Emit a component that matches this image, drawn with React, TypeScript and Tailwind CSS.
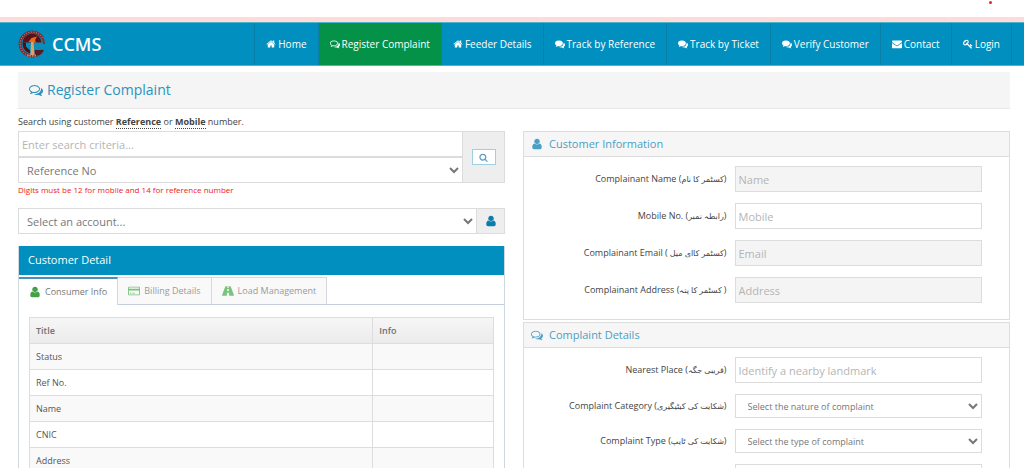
import type { ReactNode } from 'react'
import clsx from 'clsx'

const icons = {
  home: 'M1472 992v480q0 26-19 45t-45 19h-384v-384h-256v384h-384q-26 0-45-19t-19-45v-480q0-1 .5-3t.5-3l575-474 575 474q1 2 1 6zm223-69l-62 74q-8 9-21 11h-3q-13 0-21-7l-692-577-692 577q-12 8-24 7-13-2-21-11l-62-74q-8-10-7-23.5t11-21.5l719-599q32-26 76-26t76 26l244 204v-195q0-14 9-23t23-9h192q14 0 23 9t9 23v408l219 182q10 8 11 21.5t-7 23.5z',
  commentsO:
    'M704 384q-153 0-286 52t-211.5 141-78.5 191q0 82 53 158t149 132l97 56-35 84q34-20 62-39l44-31 53 10q78 14 153 14 153 0 286-52t211.5-141 78.5-191-78.5-191-211.5-141-286-52zm0-128q191 0 353.5 68.5t256.5 186.5 94 257-94 257-256.5 186.5-353.5 68.5q-86 0-176-16-124 88-278 128-36 9-86 16h-3q-11 0-20.5-8t-11.5-21q-1-3-1-6.5t.5-6.5 2-6l2.5-5 3.5-5.5 4-5 4.5-5 4-4.5q5-6 23-25t26-29.5 22.5-29 25-38.5 20.5-44q-124-72-195-177t-71-224q0-139 94-257t256.5-186.5 353.5-68.5zm822 1169q10 24 20.5 44t25 38.5 22.5 29 26 29.5 23 25q1 1 4 4.5t4.5 5 4 5 3.5 5.5l2.5 5 2 6 .5 6.5-1 6.5q-3 14-13 22t-22 7q-50-7-86-16-154-40-278-128-90 16-176 16-271 0-472-132 58 4 88 4 161 0 309-45t264-129q125-92 192-212t67-254q0-77-23-152 129 71 204 178t75 230q0 120-71 224.5t-195 176.5z',
  comments:
    'M1408 768q0 139-94 257t-256.5 186.5-353.5 68.5q-86 0-176-16-124 88-278 128-36 9-86 16h-3q-11 0-20.5-8t-11.5-21q-1-3-1-6.5t.5-6.5 2-6l2.5-5 3.5-5.5 4-5 4.5-5 4-4.5q5-6 23-25t26-29.5 22.5-29 25-38.5 20.5-44q-124-72-195-177t-71-224q0-139 94-257t256.5-186.5 353.5-68.5 353.5 68.5 256.5 186.5 94 257zm384 256q0 120-71 224.5t-195 176.5q10 24 20.5 44t25 38.5 22.5 29 26 29.5 23 25q1 1 4 4.5t4.5 5 4 5 3.5 5.5l2.5 5 2 6 .5 6.5-1 6.5q-3 14-13 22t-22 7q-50-7-86-16-154-40-278-128-90 16-176 16-271 0-472-132 58 4 88 4 161 0 309-45t264-129q125-92 192-212t67-254q0-77-23-152 129 71 204 178t75 230z',
  envelope:
    'M1792 710v794q0 66-47 113t-113 47h-1472q-66 0-113-47t-47-113v-794q44 49 101 87 362 246 497 345 57 42 92.5 65.5t94.5 48 110 24.5h2q51 0 110-24.5t94.5-48 92.5-65.5q170-123 498-345 57-39 100-87zm0-294q0 79-49 151t-122 123q-376 261-468 325-10 7-42.5 31t-54 38.5-52 32.5-57.5 27-50 9h-2q-23 0-50-9t-57.5-27-52-32.5-54-38.5-42.5-31q-91-64-262-182.5t-205-142.5q-62-42-117-115.5t-55-136.5q0-78 41.5-130t118.5-52h1472q65 0 112.5 47t47.5 113z',
  key: 'M832 512q0-80-56-136t-136-56-136 56-56 136q0 42 19 83-41-19-83-19-80 0-136 56t-56 136 56 136 136 56 136-56 56-136q0-42-19-83 41 19 83 19 80 0 136-56t56-136zm851 704q0 17-49 66t-66 49q-9 0-28.5-16t-36.5-33-38.5-40-24.5-26l-96 96 220 220q28 28 28 68 0 42-39 81t-81 39q-40 0-68-28l-671-671q-176 131-365 131-163 0-265.5-102.5t-102.5-265.5q0-160 95-313t248-248 313-95q163 0 265.5 102.5t102.5 265.5q0 189-131 365l355 355 96-96q-3-3-26-24.5t-40-38.5-33-36.5-16-28.5q0-17 49-66t66-49q13 0 23 10 6 6 46 44.5t82 79.5 86.5 86 73 78 28.5 41z',
  search:
    'M1216 832q0-185-131.5-316.5t-316.5-131.5-316.5 131.5-131.5 316.5 131.5 316.5 316.5 131.5 316.5-131.5 131.5-316.5zm512 832q0 52-38 90t-90 38q-54 0-90-38l-343-342q-179 124-399 124-143 0-273.5-55.5t-225-150-150-225-55.5-273.5 55.5-273.5 150-225 225-150 273.5-55.5 273.5 55.5 225 150 150 225 55.5 273.5q0 220-124 399l343 343q37 37 37 90z',
  user: 'M1600 1399q0 129-72.5 197t-180.5 68h-902q-108 0-180.5-68t-72.5-197q0-85 8.5-160.5t31.5-152 68.5-131 104-89 134.5-34.5q131 128 357 128t357-128q76 0 134.5 34.5t104 89 68.5 131 31.5 152 8.5 160.5zm-290-887q0 170-120 290t-294 120-294-120-120-290 120-290 294-120 294 120 120 290z',
  card: 'M160 256h1472q66 0 113 47t47 113v960q0 66-47 113t-113 47h-1472q-66 0-113-47t-47-113v-960q0-66 47-113t113-47zm0 128q-32 0-32 32v160h1536v-160q0-32-32-32zm-32 448v544q0 32 32 32h1472q32 0 32-32v-544zm128 320h256v128h-256zm384 0h384v128h-384z',
  road: 'M560 192h256l-16 256h192l-16-256h256q48 0 68 48l480 1248q48 112-36 112h-664l-32-448h-304l-32 448h-664q-84 0-36-112l480-1248q20-48 68-48zm228 416l-20 288h256l-20-288z',
}

type IconName = keyof typeof icons

function Icon({ name, className }: { name: IconName; className: string }) {
  return (
    <svg viewBox="0 0 1792 1792" fill="currentColor" className={clsx('shrink-0', className)} aria-hidden="true">
      <path d={icons[name]} />
    </svg>
  )
}

function Logo() {
  return (
    <svg viewBox="0 0 28 28" className="size-7" aria-hidden="true">
      <circle cx="14" cy="14" r="12" fill="#0b8db8" />
      <path d="M24.5 8A12 12 0 1 0 24.5 20" fill="none" stroke="#7c2f35" strokeWidth="3" />
      <path d="M24.5 8A12 12 0 1 0 24.5 20" fill="none" stroke="#c99a92" strokeWidth="1" strokeDasharray="1 1.5" />
      <path d="M24.5 8q1.500 3 1.500 6" fill="none" stroke="#7c2f35" strokeWidth="2" />
      <path d="M4.5 14a9.5 9.5 0 0 1 19-1.500h-19z" fill="#5a1014" />
      <path d="M4.500 12.500h3.500v4l4 4v3A10 10 0 0 1 4.500 14z" fill="#4a1016" />
      <path d="M16.500 20h9.500l-3.500 4.500-6 1.500z" fill="#5b1a20" />
      <path d="M10.500 12l3-4 5.500-1.500-2 3.500 1 2.500h-2l-1 2-1-2.500z" fill="#ee6a1c" />
      <path d="M13 12h2.500l1 13h-4z" fill="#dba468" />
      <path d="M9 25.500h10" stroke="#c08a7c" strokeWidth="2" strokeDasharray="1.500 1" />
    </svg>
  )
}

const navItems: { label: string; icon: IconName; active?: boolean }[] = [
  { label: 'Home', icon: 'home' },
  { label: 'Register Complaint', icon: 'commentsO', active: true },
  { label: 'Feeder Details', icon: 'home' },
  { label: 'Track by Reference', icon: 'comments' },
  { label: 'Track by Ticket', icon: 'comments' },
  { label: 'Verify Customer', icon: 'comments' },
  { label: 'Contact', icon: 'envelope' },
  { label: 'Login', icon: 'key' },
]

function Navbar() {
  return (
    <header className="flex h-11 items-stretch justify-between border-y border-[#4fb2d3] bg-[#008fbe] pr-3 pl-[18px] text-white">
      <a href="#" className="flex items-center gap-1.5">
        <Logo />
        <span className="text-lg leading-6 font-semibold">CCMS</span>
      </a>
      <nav className="flex border-r border-[#0a7fa8]">
        {navItems.map((item) => (
          <a
            key={item.label}
            href="#"
            className={clsx(
              'flex items-center gap-0.5 border-l border-[#0a7fa8] px-[11px] text-[10px]',
              item.active && 'bg-[#049148]',
            )}
          >
            <Icon name={item.icon} className="size-2.5" />
            {item.label}
          </a>
        ))}
      </nav>
    </header>
  )
}

const controlClass = 'block w-full border border-[#dcdcdc] px-[3px] text-[11px] text-[#777] placeholder:text-[#b5b5b5]'
const selectClass = 'block w-full border border-[#dcdcdc] bg-white text-[#777]'

function SearchForm() {
  return (
    <form>
      <div className="flex h-[52px]">
        <div className="flex-1">
          <input
            className={clsx(controlClass, 'h-[26px] bg-white')}
            placeholder="Enter search criteria..."
            aria-label="Search criteria"
          />
          <select className={clsx(selectClass, 'h-[26px] px-1 text-[11px]')} aria-label="Search by">
            <option>Reference No</option>
          </select>
        </div>
        <div className="flex w-[42px] items-center justify-center border border-l-0 border-[#dcdcdc] bg-[#eee]">
          <button
            type="button"
            aria-label="Search"
            className="flex h-4 w-6 items-center justify-center border border-[#9fd0e2] bg-white text-[#5a9fc0]"
          >
            <Icon name="search" className="size-[9px]" />
          </button>
        </div>
      </div>
      <p className="pt-px text-[8px] leading-3 text-[#f02020]">Digits must be 12 for mobile and 14 for reference number</p>
      <div className="mt-3 flex h-[26px]">
        <select className={clsx(selectClass, 'px-1 text-[11px]')} aria-label="Account">
          <option>Select an account...</option>
        </select>
        <button
          type="button"
          aria-label="Show account"
          className="flex w-7 shrink-0 items-center justify-center border border-l-0 border-[#dcdcdc] bg-[#eee] text-[#0a7dad]"
        >
          <Icon name="user" className="size-3" />
        </button>
      </div>
    </form>
  )
}

const tabs: { label: string; icon: IconName }[] = [
  { label: 'Consumer Info', icon: 'user' },
  { label: 'Billing Details', icon: 'card' },
  { label: 'Load Management', icon: 'road' },
]

const rows = ['Status', 'Ref No.', 'Name', 'CNIC', 'Address']

function CustomerDetail() {
  return (
    <section className="mt-3 border border-t-0 border-[#cdd9de]">
      <h2 className="flex h-[29px] items-center bg-[#008fbe] px-[9px] text-[11px] text-white">Customer Detail</h2>
      <div role="tablist" className="mt-0.5 flex h-7 border-b border-[#c5d0dc]">
        {tabs.map((tab, i) => (
          <button
            key={tab.label}
            type="button"
            role="tab"
            aria-selected={i === 0}
            className={clsx(
              'flex items-center gap-1 border-r border-[#d5d9de] px-2.5 text-[9px]',
              i === 0 ? '-mb-px border-t-2 border-t-[#4c8fbd] bg-white text-[#777]' : 'border-t bg-[#f9f9f9] text-[#999]',
            )}
          >
            <Icon name={tab.icon} className={clsx('size-3', i === 0 ? 'text-[#43a047]' : 'text-[#78c47b]')} />
            {tab.label}
          </button>
        ))}
      </div>
      <div className="px-2.5 py-3">
        <table className="w-full table-fixed border-collapse text-left text-[9px] text-[#555]">
          <thead>
            <tr className="h-[26px] bg-linear-to-b from-[#f6f6f6] to-[#ebebeb] text-[#707070]">
              <th className="w-[74%] border border-[#ddd] px-1.5 font-semibold">Title</th>
              <th className="border border-[#ddd] px-1.5 font-semibold">Info</th>
            </tr>
          </thead>
          <tbody>
            {rows.map((row) => (
              <tr key={row} className="h-[26px] odd:bg-[#f9f9f9]">
                <td className="border border-[#ddd] px-1.5">{row}</td>
                <td className="border border-[#ddd]" />
              </tr>
            ))}
          </tbody>
        </table>
      </div>
    </section>
  )
}

function Panel({ title, icon, children }: { title: string; icon: IconName; children: ReactNode }) {
  return (
    <section className="border border-[#ddd]">
      <h2 className="flex h-[25px] items-center gap-1.5 border-b border-[#ddd] bg-[#f6f6f6] px-[7px] text-[11px] text-[#4a9fc4]">
        <Icon name={icon} className="size-3" />
        {title}
      </h2>
      <div className="flex flex-col gap-[11px] pt-[9px] pr-[27px] pb-4">{children}</div>
    </section>
  )
}

function Field({ id, label, urdu, children }: { id: string; label: string; urdu: string; children: ReactNode }) {
  return (
    <div className="grid grid-cols-[9fr_11fr] items-center gap-2">
      <label htmlFor={id} className="text-right text-[9px] text-[#444]">
        {label} (<bdi lang="ur" dir="rtl" className="text-[8px]">{urdu}</bdi>)
      </label>
      {children}
    </div>
  )
}

function TextField({ id, label, urdu, placeholder, disabled }: {
  id: string
  label: string
  urdu: string
  placeholder: string
  disabled?: boolean
}) {
  return (
    <Field id={id} label={label} urdu={urdu}>
      <input
        id={id}
        placeholder={placeholder}
        disabled={disabled}
        className={clsx(controlClass, 'h-[26px]', disabled ? 'bg-[#f4f4f4]' : 'bg-white')}
      />
    </Field>
  )
}

function SelectField({ id, label, urdu, placeholder }: { id: string; label: string; urdu: string; placeholder: string }) {
  return (
    <Field id={id} label={label} urdu={urdu}>
      <select id={id} className={clsx(selectClass, 'h-6 pl-2 text-[9px]')}>
        <option>{placeholder}</option>
      </select>
    </Field>
  )
}

export default function App() {
  return (
    <div className="h-screen overflow-hidden bg-white font-['Open_Sans','DejaVu_Sans',sans-serif]">
      <div className="flex h-[17px] justify-end px-8">
        <span className="mt-px size-[3px] rounded-full bg-[#f02020]" />
      </div>
      <div className="h-[5px] bg-[#fcdcd4]" />
      <Navbar />
      <main className="pt-1.5 pr-3.5 pl-[18px]">
        <h1 className="flex h-[37px] items-center gap-1 border-b border-[#e8e8e8] bg-[#f5f5f5] px-[11px] text-sm text-[#2b93bd]">
          <Icon name="commentsO" className="size-3.5" />
          Register Complaint
        </h1>
        <p className="pt-1 text-[9px] leading-[18px] text-[#444]">
          Search using customer <b className="border-b border-dotted border-[#444]">Reference</b> or{' '}
          <b className="border-b border-dotted border-[#444]">Mobile</b> number.
        </p>
        <div className="grid grid-cols-2 items-start gap-[18px]">
          <div>
            <SearchForm />
            <CustomerDetail />
          </div>
          <div className="flex flex-col gap-0.5">
            <Panel title="Customer Information" icon="user">
              <TextField id="name" label="Complainant Name" urdu="کسٹمر کا نام" placeholder="Name" disabled />
              <TextField id="mobile" label="Mobile No." urdu="رابطہ نمبر" placeholder="Mobile" />
              <TextField id="email" label="Complainant Email" urdu="کسٹمر کاای میل " placeholder="Email" disabled />
              <TextField id="address" label="Complainant Address" urdu=" کسٹمر کا پتہ" placeholder="Address" disabled />
            </Panel>
            <Panel title="Complaint Details" icon="commentsO">
              <TextField id="place" label="Nearest Place" urdu="قریبی جگہ" placeholder="Identify a nearby landmark" />
              <SelectField id="category" label="Complaint Category" urdu="شکایت کی کیٹیگیری" placeholder="Select the nature of complaint" />
              <SelectField id="type" label="Complaint Type" urdu="شکایت کی ٹایپ" placeholder="Select the type of complaint" />
              <div className="grid grid-cols-[9fr_11fr] gap-2">
                <textarea aria-label="Complaint" className={clsx(controlClass, 'col-start-2 h-16 resize-none')} />
              </div>
            </Panel>
          </div>
        </div>
      </main>
    </div>
  )
}
